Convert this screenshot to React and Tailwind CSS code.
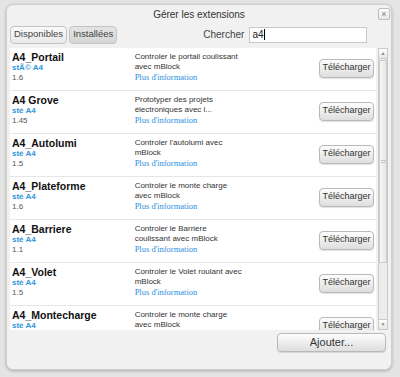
import React from 'react'

const rows = [
    { name: 'A4_Portail', author: 'stÃ© A4', version: '1.6', desc: ['Controler le portail coulissant', 'avec mBlock'] },
    { name: 'A4 Grove', author: 'sté A4', version: '1.45', desc: ['Prototyper des projets', 'électroniques avec l...'] },
    { name: 'A4_Autolumi', author: 'sté A4', version: '1.5', desc: ["Controler l'autolumi avec", 'mBlock'] },
    { name: 'A4_Plateforme', author: 'sté A4', version: '1.6', desc: ['Controler le monte charge', 'avec mBlock'] },
    { name: 'A4_Barriere', author: 'sté A4', version: '1.1', desc: ['Controler le Barriere', 'coulissant avec mBlock'] },
    { name: 'A4_Volet', author: 'sté A4', version: '1.5', desc: ['Controler le Volet roulant avec', 'mBlock'] },
    { name: 'A4_Montecharge', author: 'sté A4', version: '1.6', desc: ['Controler le monte charge', 'avec mBlock'] },
]

const btn = 'rounded-[4px] border border-[#b9b9b9] bg-gradient-to-b from-[#fdfdfd] to-[#dedede] text-[#333] shadow-[0_1px_1px_rgba(0,0,0,0.12)]'

const Row = ({ r }) => (
    <div className="flex h-[43px] shrink-0 border-b border-[#e6e6e6] pl-[2px] pr-[2px]">
        <div className="w-[123px] pt-[3px] leading-[10px]">
            <div className="text-[10.5px] font-bold text-[#111] leading-[12px]">{r.name}</div>
            <div className="text-[8px] font-bold text-[#2f96dc]">{r.author}</div>
            <div className="text-[8px] text-[#555]">{r.version}</div>
        </div>
        <div className="w-[185px] pt-[4px] text-[8px] leading-[10px] text-[#333]">
            <div>{r.desc[0]}</div>
            <div>{r.desc[1]}</div>
            <div className="font-['Liberation_Serif',serif] text-[8.5px] text-[#2a8ee0]">Plus d'information</div>
        </div>
        <div className="ml-auto flex items-center pb-[2px]">
            <button className={`${btn} h-[19px] w-[55px] text-[9px]`}>Télécharger</button>
        </div>
    </div>
)

export default function App() {
    return (
        <div className="h-[377px] w-[400px] bg-[#e4e4e4] pt-[4px] pl-[6px] font-['Liberation_Sans',Arial,sans-serif]">
            <div className="flex h-[366px] w-[386px] flex-col rounded-[7px] border border-[#cfcfcf] bg-[#f1f1f1] px-[3px] shadow-[0_1px_3px_rgba(0,0,0,0.25)]">
                {/* Title */}
                <div className="relative flex h-[18px] items-center justify-center pt-[1px] text-[10px] text-[#333]">
                    Gérer les extensions
                    <div className="absolute right-[-2px] top-[3px] flex h-[12px] w-[12px] items-center justify-center rounded-[2px] border border-[#bdbdbd] bg-gradient-to-b from-white to-[#e8e8e8] text-[9px] leading-none text-[#777]">×</div>
                </div>

                {/* Toolbar */}
                <div className="mt-[2px] flex h-[19px] items-center">
                    <button className="h-[18px] rounded-[4px] border border-[#c4c4c4] bg-gradient-to-b from-[#fafafa] to-[#e9e9e9] px-[3px] text-[9.5px] text-[#444]">Disponibles</button>
                    <button className="ml-[2px] h-[18px] rounded-[4px] border border-[#c4c4c4] bg-gradient-to-b from-[#e4e4e4] to-[#d6d6d6] px-[3px] text-[9.5px] text-[#444]">Installées</button>
                    <span className="ml-[86px] text-[10px] text-[#444]">Chercher</span>
                    <div className="ml-[5px] flex h-[16px] w-[118px] items-center border border-[#c8c8c8] bg-white pl-[2px] text-[10px] text-[#222]">a4<span className="h-[11px] w-px bg-black" /></div>
                </div>

                {/* List */}
                <div className="mt-[4px] flex h-[282px]">
                    <div className="flex w-[370px] flex-col overflow-hidden bg-white">
                        {rows.map((r) => <Row key={r.name} r={r} />)}
                    </div>
                    <div className="ml-[2px] flex w-[10px] flex-col border border-[#c9c9c9] bg-[#ececec]">
                        <div className="flex h-[10px] items-center justify-center border-b border-[#c9c9c9] bg-gradient-to-b from-white to-[#e6e6e6] text-[5px] leading-none text-[#888]">▲</div>
                        <div className="mt-[1px] flex h-[203px] items-center justify-center border border-[#cccccc] bg-gradient-to-r from-[#f7f7f7] to-[#e7e7e7]">
                            <div className="h-[3px] w-[5px] border-y border-[#c4c4c4]" />
                        </div>
                        <div className="mt-auto flex h-[10px] items-center justify-center border-t border-[#c9c9c9] bg-gradient-to-b from-white to-[#e6e6e6] text-[5px] leading-none text-[#888]">▼</div>
                    </div>
                </div>

                {/* Footer */}
                <div className="mt-[3px] flex justify-end pr-[2px]">
                    <button className={`${btn} h-[19px] w-[109px] text-[11px]`}>Ajouter...</button>
                </div>
            </div>
        </div>
    )
}
